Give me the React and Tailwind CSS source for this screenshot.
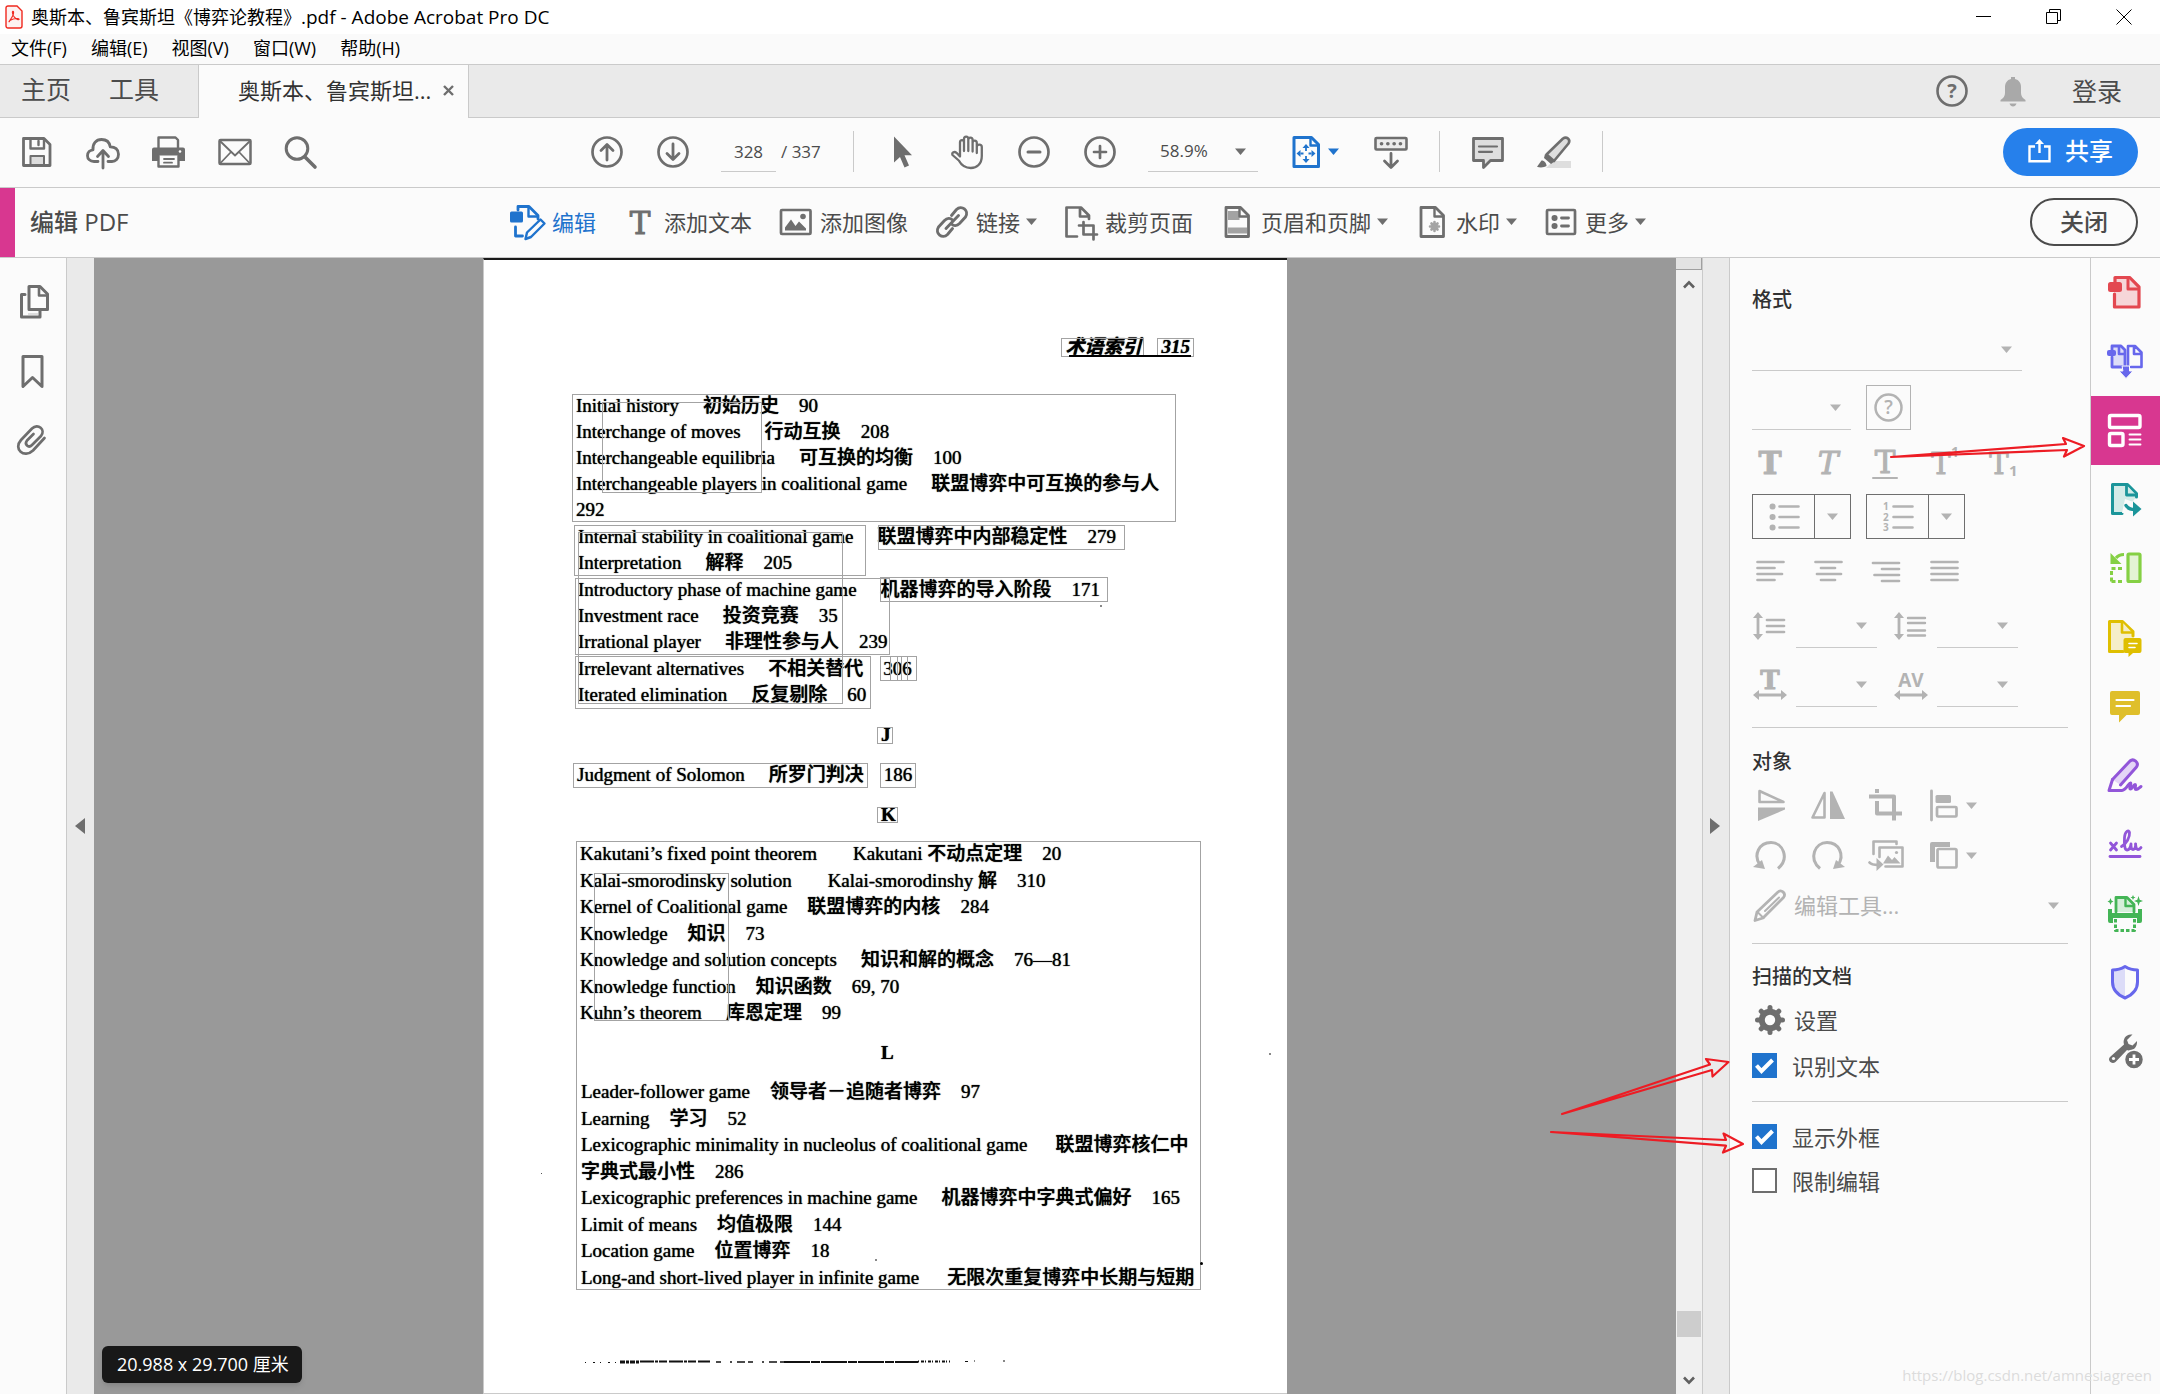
import React from "react";

const UI_FONT = "font-['Open_Sans','Noto_Sans_CJK_SC',sans-serif]";

function Icon({ children, className = "", size = 36 }) {
  return (
    <svg
      width={size}
      height={size}
      viewBox="0 0 36 36"
      fill="none"
      stroke="currentColor"
      strokeWidth="3"
      strokeLinecap="round"
      strokeLinejoin="round"
      aria-hidden="true"
      className={"shrink-0 overflow-visible " + className}
    >
      {children}
    </svg>
  );
}

function Caret({ className = "" }) {
  return (
    <svg width="11" height="7" viewBox="0 0 11 7" fill="currentColor" aria-hidden="true" className={"shrink-0 " + className}>
      <path d="M0 0.5h11L5.5 7z" />
    </svg>
  );
}

function IconButton({ label, children, className = "" }) {
  return (
    <button type="button" aria-label={label} className={"flex shrink-0 items-center " + className}>
      {children}
    </button>
  );
}

function SlabT({ x = 18, y = 30, bold, italic, size = 31 }) {
  return (
    <text
      x={x}
      y={y}
      textAnchor="middle"
      fill="currentColor"
      stroke="currentColor"
      strokeWidth="1"
      fontFamily="DejaVu Serif, serif"
      fontSize={size}
      fontWeight={bold ? 700 : 400}
      fontStyle={italic ? "italic" : "normal"}
    >
      T
    </text>
  );
}

/* ---------- window chrome ---------- */

function TitleBar() {
  return (
    <header className="flex h-[34px] items-center justify-between bg-white pl-[5px] pr-[28px]">
      <div className="flex items-center gap-2">
        <svg width="18" height="24" viewBox="0 0 18 24" fill="none" stroke="#f0281e" strokeWidth="1.4" aria-hidden="true">
          <path d="M3 1h9l5 5v15a2 2 0 0 1-2 2H3a2 2 0 0 1-2-2V3a2 2 0 0 1 2-2z" fill="#fdf2f1" />
          <path d="M4.2 16.8c1.2-2.6 4.6-6 4.4-9.6-.2-1.4-1.4-1-1.200.6.3 3 3 6.200 5.600 6.900 1.500.2 1.500-1 0-1.200-3-.3-6.200.8-8.200 2.100-.8.7-1 1.300-.6 1.200z" strokeWidth="1.100" />
        </svg>
        <h1 className="text-[18px] leading-6 text-black">
          奥斯本、鲁宾斯坦《博弈论教程》<span className="text-[19px]">.pdf - Adobe Acrobat Pro DC</span>
        </h1>
      </div>
      <div className="flex items-center gap-[54px] text-black">
        <IconButton label="最小化">
          <svg width="16" height="16" viewBox="0 0 16 16" stroke="currentColor"><path d="M0 7.500h15" /></svg>
        </IconButton>
        <IconButton label="还原">
          <svg width="16" height="16" viewBox="0 0 16 16" stroke="currentColor" fill="none"><path d="M.5 3.500h11v11h-11zM3.500 3.500v-3h11v11h-3" /></svg>
        </IconButton>
        <IconButton label="关闭窗口">
          <svg width="16" height="16" viewBox="0 0 16 16" stroke="currentColor"><path d="M.5.5l15 15M15.500.5l-15 15" /></svg>
        </IconButton>
      </div>
    </header>
  );
}

function MenuBar() {
  return (
    <nav className="flex h-[30px] items-center gap-6 bg-[#fafafa] pb-0.5 pl-[11px] text-[18px] leading-6 text-black">
      {["文件(F)", "编辑(E)", "视图(V)", "窗口(W)", "帮助(H)"].map((m) => (
        <button type="button" key={m}>{m}</button>
      ))}
    </nav>
  );
}

function TabBar() {
  return (
    <div className="flex h-[54px] border-t border-[#cacaca] bg-[#eaeaea] text-[#4b4b4b]">
      <div className="flex w-[198px] shrink-0 items-center gap-[38px] border-b border-[#cacaca] pb-0.5 pl-[21px] text-[25px]">
        <button type="button">主页</button>
        <button type="button">工具</button>
      </div>
      <div className="flex w-[271px] shrink-0 items-center justify-between border-x border-[#cacaca] bg-[#fbfbfb] pb-0.5 pl-[39px] pr-[14px] text-[22px] text-[#323232]">
        <button type="button" className="whitespace-nowrap">奥斯本、鲁宾斯坦...</button>
        <IconButton label="关闭标签页">
          <svg width="11" height="11" viewBox="0 0 11 11" stroke="#6e6e6e" strokeWidth="2.400"><path d="M1 1l9 9M10 1l-9 9" /></svg>
        </IconButton>
      </div>
      <div className="flex flex-1 items-center justify-end border-b border-[#cacaca] pr-[38px]">
        <IconButton label="帮助" className="text-[#6e6e6e]">
          <Icon>
            <circle cx="18" cy="18" r="14.500" strokeWidth="2.600" />
            <text x="18" y="25" textAnchor="middle" fill="currentColor" stroke="none" fontFamily="Open Sans, sans-serif" fontWeight="700" fontSize="20">?</text>
          </Icon>
        </IconButton>
        <IconButton label="通知" className="ml-[25px] text-[#a9a9a9]">
          <Icon>
            <path d="M16 4h4v2c4 1 6 4 6 8v6c0 3 1.500 5 4.500 7v1.500h-25V27c3-2 4.500-4 4.500-7v-6c0-4 2-7 6-8zM14.500 30.500h7c-.5 2-2 3-3.500 3s-3-1-3.500-3z" fill="currentColor" stroke="none" />
          </Icon>
        </IconButton>
        <button type="button" className="ml-[41px] text-[25px] leading-9 text-[#4b4b4b]">登录</button>
      </div>
    </div>
  );
}

const VRule = () => <div className="h-[41px] w-px bg-[#cacaca]" />;

function Toolbar() {
  return (
    <div className="grid h-[70px] grid-cols-[1fr_auto_1fr] items-center border-b border-[#cacaca] bg-[#fbfbfb] pb-0.5 text-[#6e6e6e]">
      <div className="flex items-center gap-[30px] pl-[19px]">
        <IconButton label="保存">
          <Icon>
            <path d="M4.500 4.500h20.500l6 6v21h-26.500z" strokeWidth="2.800" />
            <path d="M11.500 5v9.500h13.500v-9.500" strokeWidth="2.400" />
            <path d="M19.500 7v4" strokeWidth="2.400" />
            <path d="M11.500 31v-9h13.500v9z" fill="#dcdcdc" strokeWidth="2" />
          </Icon>
        </IconButton>
        <IconButton label="上传到云">
          <Icon>
            <path d="M13 27.500h-4c-4 0-6.500-2.600-6.500-5.800 0-3.400 2.500-5.700 5.500-5.900-.6-6 3-10.300 8.500-10.300 4.800 0 8 2.800 8.700 7.300 4.800-.1 8.300 2.600 8.300 7.400 0 4.300-2.900 7.300-6.500 7.300h-4" strokeWidth="2.800" />
            <path d="M18 34V17M12.500 22.500l5.500-6 5.500 6" strokeWidth="2.800" />
          </Icon>
        </IconButton>
        <IconButton label="打印">
          <Icon>
            <path d="M7.500 14V3.500h17l2.500 2.500v8" strokeWidth="2.400" />
            <path d="M3 13.500h29a2 2 0 0 1 2 2V27h-6v-5.500H7V27H1V15.500a2 2 0 0 1 2-2z" fill="currentColor" stroke="none" />
            <path d="M7.500 22v10.500h20V22" strokeWidth="2.400" />
            <path d="M13 25h10M13 28.700h8" strokeWidth="1.800" />
            <circle cx="29" cy="17.500" r="1.300" fill="#fff" stroke="none" />
          </Icon>
        </IconButton>
        <IconButton label="电子邮件">
          <Icon>
            <rect x="2.500" y="6" width="31" height="24" rx="1" strokeWidth="2.500" />
            <path d="M3 7l15 14.500L33 7M3.500 29l10.500-11M32.500 29L22 18" strokeWidth="1.800" />
          </Icon>
        </IconButton>
        <IconButton label="查找">
          <Icon>
            <circle cx="14" cy="14.500" r="10.800" strokeWidth="3" />
            <path d="M22 23l10 10" strokeWidth="3.600" />
          </Icon>
        </IconButton>
      </div>

      <div className="flex items-center gap-[30px] pl-8">
        <IconButton label="上一页">
          <Icon>
            <circle cx="18" cy="18" r="14.500" strokeWidth="2.700" />
            <path d="M18 26V11M12 16.500l6-6 6 6" strokeWidth="2.800" />
          </Icon>
        </IconButton>
        <IconButton label="下一页">
          <Icon>
            <circle cx="18" cy="18" r="14.500" strokeWidth="2.700" />
            <path d="M18 10v15M12 19.500l6 6 6-6" strokeWidth="2.800" />
          </Icon>
        </IconButton>
        <label className="flex items-center gap-[5px] text-[17px] text-[#4b4b4b]">
          <input aria-label="页码" defaultValue="328" className="h-[41px] w-[55px] border-b border-[#cacaca] bg-transparent text-center outline-none" />
          <span className="w-[42px] whitespace-nowrap">/ 337</span>
        </label>
        <VRule />
        <IconButton label="选择">
          <Icon><path d="M10 2.500v26l6-5.500 4.500 10.500 4.500-2-4.500-10.300h7.500z" fill="currentColor" stroke="none" /></Icon>
        </IconButton>
        <IconButton label="手形工具">
          <Icon>
            <path d="M10 22V8.500c0-3.300 4-3.300 4 0V17M14 9V5c0-3.300 4.300-3.300 4.300 0v12M18.300 6c0-3.300 4.300-3.300 4.300 0v11.500M22.600 9c0-3.300 4.200-3.300 4.200 0v10M26.800 13c0-3.200 5-3.200 5 0v9c0 8-5 12-11 12-6.500 0-9.500-3-12-7.500L2.500 21c-1-2.500 2-4 4-2.200l3.500 3.700" strokeWidth="2.300" />
          </Icon>
        </IconButton>
        <IconButton label="缩小">
          <Icon><circle cx="18" cy="18" r="14.500" strokeWidth="2.700" /><path d="M12 18h12" /></Icon>
        </IconButton>
        <IconButton label="放大">
          <Icon><circle cx="18" cy="18" r="14.500" strokeWidth="2.700" /><path d="M12 18h12M18 12v12" strokeWidth="2.700" /></Icon>
        </IconButton>
        <div className="relative flex w-[110px] items-center text-[17px] text-[#4b4b4b]">
          <select aria-label="缩放比例" className="h-[41px] w-full appearance-none border-b border-[#cacaca] bg-transparent pl-[12px] outline-none">
            <option>58.9%</option>
          </select>
          <Caret className="pointer-events-none absolute right-[12px] text-[#6e6e6e]" />
        </div>
        <IconButton label="适合窗口" className="mr-1 gap-[4px] text-[#1f73cd]">
          <Icon>
            <path d="M6 3.500h17.500l7 7v22H6z" strokeWidth="3" />
            <path d="M22.500 4v7.500h7.500" strokeWidth="2.400" />
            <path d="M18 14v3M18 22v3M12.500 19.500h3M20.500 19.500h3" strokeWidth="1.800" strokeLinecap="butt" />
            <path d="M18 10l3.500 4h-7zM18 29l3.500-4h-7zM8.500 19.500l4-3.500v7zM27.500 19.500l-4-3.500v7z" fill="currentColor" stroke="none" />
          </Icon>
          <Caret />
        </IconButton>
        <IconButton label="阅读模式">
          <Icon>
            <rect x="2.500" y="4" width="31" height="11.500" rx="1" fill="#ececec" strokeWidth="2.600" />
            <path d="M8.500 9.700h.1M14.800 9.700h.1M21.100 9.700h.1M27.400 9.700h.1" strokeWidth="3.600" />
            <path d="M18 19.500v13M11.500 27l6.500 6.500 6.500-6.500" strokeWidth="2.800" />
          </Icon>
        </IconButton>
        <VRule />
        <IconButton label="添加注释">
          <Icon>
            <path d="M3.500 4.500h29v22h-12l-7 7v-7h-10z" fill="#dedede" strokeWidth="2.800" />
            <path d="M9 12.500h18M9 17.800h13" strokeWidth="2.200" />
          </Icon>
        </IconButton>
        <IconButton label="高亮文本">
          <Icon>
            <path d="M17 27h18v7H10z" fill="#dedede" stroke="none" />
            <path d="M10.500 20.500L27 4.500c3.500-2.500 8 1 5.500 5L18 27z" fill="#dedede" strokeWidth="2.600" />
            <path d="M9 20l9.500 7.500-3.500 2.500-7-6z" fill="currentColor" stroke="none" />
            <path d="M5.500 26.500c3 0 5 2.500 5 5.500-2 1.500-6.500 1.800-9.500.8z" fill="currentColor" stroke="none" />
          </Icon>
        </IconButton>
        <VRule />
      </div>

      <div className="flex justify-end pr-[22px]">
        <button type="button" className="flex h-12 w-[135px] items-center justify-center gap-[14px] rounded-full bg-[#2680eb] pb-px text-[24px] font-medium text-white">
          <svg width="23" height="24" viewBox="0 0 23 24" fill="none" stroke="currentColor" strokeWidth="2.400" aria-hidden="true">
            <path d="M7 7.500H1.500v14.800h20V7.500H16M11.500 14V3" />
            <path d="M11.500 0l4.500 5h-9z" fill="currentColor" stroke="none" />
          </svg>
          共享
        </button>
      </div>
    </div>
  );
}

const PageOutline = () => (
  <>
    <path d="M7 3.500h14.500l8 8V32.500H7z" strokeWidth="2.800" />
    <path d="M20.500 4v8.500h8.500" strokeWidth="2.400" />
  </>
);

function EditItem({ icon, label, caret, active }) {
  return (
    <button type="button" className={"flex items-center gap-[6px] text-[22px] leading-8 " + (active ? "text-[#1f73cd]" : "text-[#4b4b4b]")}>
      <span className={active ? "" : "text-[#6e6e6e]"}>{icon}</span>
      <span className="whitespace-nowrap">{label}</span>
      {caret && <Caret className="text-[#6e6e6e]" />}
    </button>
  );
}

function EditBar() {
  return (
    <div className="grid h-[70px] grid-cols-[1fr_auto_1fr] items-center border-b border-[#cacaca] bg-[#fbfbfb]">
      <div className="flex h-full items-center gap-[15px]">
        <div className="h-full w-[15px] bg-[#d83790]" />
        <h2 className="pb-0.5 text-[24px] font-medium text-[#4b4b4b]">编辑 PDF</h2>
      </div>
      <div className="flex items-center gap-[26px] pb-0.5 pr-1">
        <EditItem
          active
          label="编辑"
          icon={
            <Icon>
              <path d="M8 6V2.500h11l9 9V15" strokeWidth="2.800" />
              <path d="M18.500 3v9.500h8.500" strokeWidth="2.400" />
              <rect x="0" y="7.500" width="13" height="11" rx="1.500" fill="currentColor" stroke="none" />
              <path d="M5.500 23v9h7" strokeWidth="2.800" />
              <path d="M17 28.500L30.500 15.500l4 4L21 33l-5.500 2z" strokeWidth="2.400" />
            </Icon>
          }
        />
        <EditItem label="添加文本" icon={<Icon><SlabT /></Icon>} />
        <EditItem
          label="添加图像"
          icon={
            <Icon>
              <rect x="3" y="6" width="29.500" height="24" rx="1" strokeWidth="2.700" />
              <path d="M7 26.500v-3l6-8 4.500 6.500 3.500-4.500 7 7v2z" fill="currentColor" stroke="none" />
              <circle cx="25" cy="12.500" r="2.800" fill="currentColor" stroke="none" />
            </Icon>
          }
        />
        <EditItem
          label="链接"
          caret
          icon={
            <Icon>
              <path d="M17.500 11.500l5-6c5-5 13 1 9 7.500l-6 6.500c-2.500 2.500-6 2.500-8 .5M18.500 24.500l-5 6c-5 5-13-1-9-7.500l6-6.500c2.500-2.500 6-2.500 8-.5M12 24.500L24.500 11.500" strokeWidth="2.900" />
            </Icon>
          }
        />
        <EditItem
          label="裁剪页面"
          icon={
            <Icon>
              <path d="M14 32.500H3.500v-29H18l8 8V15M17 4v8.500h8.500" strokeWidth="2.700" />
              <path d="M16 21.500h14.500v14M20.500 18v12.500h13.500" strokeWidth="2.700" />
            </Icon>
          }
        />
        <EditItem
          label="页眉和页脚"
          caret
          icon={
            <Icon>
              <path d="M9 7h11.500v9H9zM9 23.500h19v6H9z" fill="#a3a3a3" stroke="none" />
              <PageOutline />
            </Icon>
          }
        />
        <EditItem
          label="水印"
          caret
          icon={
            <Icon>
              <PageOutline />
              <path d="M20.500 18v9M16 22.500h9M17.500 19.500l6 6M23.500 19.500l-6 6" stroke="#a3a3a3" strokeWidth="2.600" />
            </Icon>
          }
        />
        <EditItem
          label="更多"
          caret
          icon={
            <Icon>
              <rect x="4" y="6" width="28" height="24" rx="1" strokeWidth="2.700" />
              <path d="M11.500 14h.1M11.500 22h.1" strokeWidth="6" />
              <path d="M18.500 14h7M18.500 22h7" strokeWidth="2.800" />
            </Icon>
          }
        />
      </div>
      <div className="flex justify-end pb-0.5 pr-[22px]">
        <button type="button" className="h-12 w-[108px] rounded-full border-2 border-[#4b4b4b] text-[24px] font-medium leading-none text-[#4b4b4b]">关闭</button>
      </div>
    </div>
  );
}

/* ---------- document ---------- */

const SECTION_I = [
  {
    pad: "pl-[92px]",
    lines: [
      ["Initial history", "初始历史", "90"],
      ["Interchange of moves", "行动互换", "208"],
      ["Interchangeable equilibria", "可互换的均衡", "100"],
      ["Interchangeable players in coalitional game", "联盟博弈中可互换的参与人"],
      ["292"],
    ],
  },
  {
    pad: "pl-[94px]",
    lines: [
      ["Internal stability in coalitional game", "联盟博弈中内部稳定性", "279"],
      ["Interpretation", "解释", "205"],
    ],
  },
  {
    pad: "pl-[94px]",
    lines: [
      ["Introductory phase of machine game", "机器博弈的导入阶段", "171"],
      ["Investment race", "投资竞赛", "35"],
      ["Irrational player", "非理性参与人", "239"],
    ],
  },
  {
    pad: "pl-[94px]",
    lines: [
      ["Irrelevant alternatives", "不相关替代", "306"],
      ["Iterated elimination", "反复剔除", "60"],
    ],
  },
];

const SECTION_K = [
  ["Kakutani’s fixed point theorem", "Kakutani 不动点定理", "20"],
  ["Kalai-smorodinsky solution", "Kalai-smorodinshy 解", "310"],
  ["Kernel of Coalitional game", "联盟博弈的内核", "284"],
  ["Knowledge", "知识", "73"],
  ["Knowledge and solution concepts", "知识和解的概念", "76—81"],
  ["Knowledge function", "知识函数", "69, 70"],
  ["Kuhn’s theorem", "库恩定理", "99"],
];

const SECTION_L = [
  ["Leader-follower game", "领导者－追随者博弈", "97"],
  ["Learning", "学习", "52"],
  ["Lexicographic minimality in nucleolus of coalitional game", "联盟博弈核仁中"],
  ["字典式最小性", "286"],
  ["Lexicographic preferences in machine game", "机器博弈中字典式偏好", "165"],
  ["Limit of means", "均值极限", "144"],
  ["Location game", "位置博弈", "18"],
  ["Long-and short-lived player in infinite game", "无限次重复博弈中长期与短期"],
];

/* Space after the English term, where it differs from the usual 20px. */
const TERM_GAP = {
  "Kakutani’s fixed point theorem": "mr-9",
  "Kalai-smorodinsky solution": "mr-9",
  "Knowledge and solution concepts": "mr-6",
  "Kuhn’s theorem": "mr-6",
  "Lexicographic minimality in nucleolus of coalitional game": "mr-7",
  "Lexicographic preferences in machine game": "mr-6",
  "Long-and short-lived player in infinite game": "mr-7",
};

function Entry({ parts, className = "leading-[26px]", gap = "mr-5" }) {
  return (
    <li className={"flex whitespace-nowrap " + className}>
      {parts.map((p, i) => (
        <span key={p} className={i === 0 ? TERM_GAP[p] || gap : "mr-5"}>{p}</span>
      ))}
    </li>
  );
}

const Letter = ({ children }) => (
  <h3 className="mt-[14px] pl-[397px] text-[19px] font-bold leading-[26px]">{children}</h3>
);

const OUTLINES = [
  "left-[577px] top-[80px] h-[19px] w-[83px]",
  "left-[673px] top-[80px] h-[19px] w-[37px]",
  "left-[88px] top-[136px] h-[128px] w-[604px]",
  "left-[118px] top-[144px] h-[91px] w-[160px]",
  "left-[90px] top-[267px] h-[51px] w-[292px]",
  "left-[394px] top-[267px] h-[25px] w-[247px]",
  "left-[94px] top-[274px] h-[172px] w-[265px]",
  "left-[91px] top-[320px] h-[77px] w-[315px]",
  "left-[396px] top-[319px] h-[25px] w-[228px]",
  "left-[91px] top-[398px] h-[53px] w-[296px]",
  "left-[396px] top-[398px] h-[25px] w-[37px]",
  "left-[406px] top-[398px] h-[25px] w-[8px]",
  "left-[417px] top-[398px] h-[25px] w-[7px]",
  "left-[393px] top-[469px] h-[17px] w-[16px]",
  "left-[89px] top-[505px] h-[25px] w-[295px]",
  "left-[396px] top-[505px] h-[25px] w-[36px]",
  "left-[393px] top-[549px] h-[16px] w-[21px]",
  "left-[92px] top-[583px] h-[449px] w-[625px]",
  "left-[110px] top-[615px] h-[148px] w-[135px]",
];

function DocumentPage() {
  return (
    <article className="relative w-[804px] shrink-0 border-b border-l border-t-2 border-b-[#cacaca] border-l-[#cacaca] border-t-[#1a1a1a] bg-white pt-[74px] font-['Liberation_Serif','Noto_Sans_CJK_SC',serif] text-[19px] font-medium text-black [text-shadow:0_0_1px_#000]">
      <p className="flex justify-end gap-5 pr-[97px] font-bold italic leading-[26px]">
        <span>术语索引</span>
        <span>315</span>
      </p>
      <div className="mt-[33px] flex flex-col gap-px">
        {SECTION_I.map((g) => (
          <ul key={g.lines[0][0]} className={g.pad}>
            {g.lines.map((l) => <Entry key={l[0]} parts={l} gap="mr-6" />)}
          </ul>
        ))}
      </div>
      <Letter>J</Letter>
      <ul className="mt-[14px] pl-[93px]">
        <Entry parts={["Judgment of Solomon", "所罗门判决", "186"]} gap="mr-6" />
      </ul>
      <Letter>K</Letter>
      <ul className="mt-[13px] pl-[96px]">
        {SECTION_K.map((l) => <Entry key={l[0]} parts={l} className="odd:leading-[26px] even:leading-[27px]" />)}
      </ul>
      <Letter>L</Letter>
      <ul className="mt-[13px] pl-[97px]">
        {SECTION_L.map((l) => <Entry key={l[0]} parts={l} className="odd:leading-[26px] even:leading-[27px]" />)}
      </ul>

      <div className="pointer-events-none absolute inset-x-0 -top-0.5 bottom-0">
        {OUTLINES.map((pos) => (
          <div key={pos} className={"absolute border border-[#a3a3a3] " + pos} />
        ))}
        <div className="absolute left-[585px] top-[97px] h-[2px] w-[122px] bg-black" />
        <svg className="absolute left-[100px] top-[1100px]" width="425" height="8" viewBox="0 0 425 8" stroke="#111" fill="none" aria-hidden="true">
          <path d="M1 4.500h34" strokeDasharray="1 7 2 5" />
          <path d="M36 4h20" strokeWidth="3" strokeDasharray="5 1 3 1" />
          <path d="M56 3.500h70" strokeWidth="2" strokeDasharray="14 1 3 1 8 2" />
          <path d="M132 4h68" strokeDasharray="5 9 2 5 8 3" strokeWidth="1.500" />
          <path d="M200 4h134" strokeWidth="2" strokeDasharray="26 1 9 1" />
          <path d="M334 3.500h32" strokeWidth="2" strokeDasharray="1 2 3 1" />
          <path d="M381 3.500h3M390 3h1M419 3h2" />
        </svg>
        <div className="absolute left-[716px] top-[1004px] size-[3px] rounded-full bg-black" />
        <div className="absolute left-[616px] top-[347px] size-[2px] bg-[#888]" />
        <div className="absolute left-[391px] top-[1001px] size-[2px] bg-[#888]" />
        <div className="absolute left-[785px] top-[795px] size-[2px] bg-[#888]" />
        <div className="absolute left-[57px] top-[915px] size-[1px] bg-[#555]" />
      </div>
    </article>
  );
}

function Scrollbar() {
  return (
    <div className="flex w-[26px] shrink-0 flex-col items-center bg-[#f0f0f0] text-[#606060]">
      <div className="h-[12px] w-full border-b border-r border-[#a0a0a0] bg-[#e3e3e3]" />
      <IconButton label="向上滚动" className="mt-[10px]">
        <svg width="12" height="9" viewBox="0 0 12 9" fill="none" stroke="currentColor" strokeWidth="2.600"><path d="M1 7.500L6 2.300l5 5.200" /></svg>
      </IconButton>
      <div className="mt-auto h-[26px] w-6 bg-[#cdcdcd]" />
      <IconButton label="向下滚动" className="mb-[9px] mt-[39px]">
        <svg width="12" height="9" viewBox="0 0 12 9" fill="none" stroke="currentColor" strokeWidth="2.600"><path d="M1 1.500l5 5.200 5-5.200" /></svg>
      </IconButton>
    </div>
  );
}

/* ---------- format panel ---------- */

function LineSelect({ label, className }) {
  return (
    <div className={"relative flex items-center " + className}>
      <select aria-label={label} className="h-full w-full appearance-none border-b border-[#cacaca] bg-transparent outline-none" />
      <Caret className="pointer-events-none absolute right-[10px] text-[#b3b3b3]" />
    </div>
  );
}

function ListButton({ label, children }) {
  return (
    <div className="flex h-[45px] w-[99px] border border-[#6e6e6e]">
      <button type="button" aria-label={label} className="flex w-[62px] items-center justify-center border-r border-[#6e6e6e]">{children}</button>
      <button type="button" aria-label={label + "选项"} className="flex flex-1 items-center justify-center"><Caret /></button>
    </div>
  );
}

function Check({ label, checked, className = "" }) {
  return (
    <label className={"flex h-[25px] items-center gap-[15px] text-[22px] text-[#4b4b4b] " + className}>
      <span className="relative size-[25px] shrink-0">
        <input type="checkbox" defaultChecked={checked} className="peer absolute inset-0 size-[25px] appearance-none border-2 border-[#6e6e6e] bg-white checked:border-[#1f73cd] checked:bg-[#1f73cd]" />
        <svg className="pointer-events-none absolute inset-0 hidden peer-checked:block" width="25" height="25" viewBox="0 0 25 25" fill="none" stroke="#fff" strokeWidth="4" aria-hidden="true">
          <path d="M4.500 12.500l5 5.500L20.500 7" />
        </svg>
      </span>
      <span className="leading-8">{label}</span>
    </label>
  );
}

const Rule = ({ className }) => <hr className={"mr-[22px] border-0 border-t border-[#cacaca] " + className} />;

function Numeral({ x, y, children, size = 10 }) {
  return <text x={x} y={y} fill="currentColor" stroke="none" fontFamily="Open Sans, sans-serif" fontWeight="700" fontSize={size}>{children}</text>;
}

function FormatPanel() {
  return (
    <aside className="w-[361px] shrink-0 border-l border-[#cacaca] bg-[#fbfbfb] pl-[22px] pt-7 text-[#b3b3b3]">
      <h3 className="text-[20px] font-medium leading-7 text-[#323232]">格式</h3>
      <LineSelect label="字体" className="mt-[14px] h-[43px] w-[270px]" />
      <div className="mt-[14px] flex gap-[15px]">
        <LineSelect label="字号" className="h-[45px] w-[99px]" />
        <button type="button" aria-label="字体颜色" className="flex size-[45px] items-center justify-center border border-[#b3b3b3]">
          <Icon>
            <circle cx="17.500" cy="17.500" r="13" strokeWidth="2.500" />
            <text x="17.500" y="24" textAnchor="middle" fill="currentColor" stroke="none" fontFamily="Open Sans, sans-serif" fontWeight="600" fontSize="19">?</text>
          </Icon>
        </button>
      </div>
      <div className="mt-[14px] flex gap-[22px]">
        <IconButton label="粗体"><Icon><SlabT bold y={30} /></Icon></IconButton>
        <IconButton label="斜体"><Icon><SlabT italic y={30} /></Icon></IconButton>
        <IconButton label="下划线"><Icon><SlabT y={29} x={17} /><path d="M5 34h24" strokeWidth="2" /></Icon></IconButton>
        <IconButton label="上标"><Icon><SlabT y={30} x={15} size={29} /><Numeral x={25} y={13} size={14}>1</Numeral></Icon></IconButton>
        <IconButton label="下标"><Icon><SlabT y={30} x={15} size={29} /><Numeral x={25} y={32} size={15}>1</Numeral></Icon></IconButton>
      </div>
      <div className="mt-[14px] flex gap-[15px]">
        <ListButton label="项目符号列表">
          <Icon>
            <path d="M6.500 7.500h.1M6.500 18h.1M6.500 28.500h.1" strokeWidth="6" />
            <path d="M13.500 7.500h19M13.500 18h19M13.500 28.500h19" strokeWidth="2.600" />
          </Icon>
        </ListButton>
        <ListButton label="编号列表">
          <Icon>
            <Numeral x={3} y={11}>1</Numeral>
            <Numeral x={3} y={21.500}>2</Numeral>
            <Numeral x={3} y={32}>3</Numeral>
            <path d="M13.500 7.500h19M13.500 18h19M13.500 28.500h19" strokeWidth="2.600" />
          </Icon>
        </ListButton>
      </div>
      <div className="mt-[14px] flex gap-[22px]">
        <IconButton label="左对齐"><Icon><path d="M5.500 9h26M5.500 15h17M5.500 21h24.500M5.500 27h17" strokeWidth="2.700" /></Icon></IconButton>
        <IconButton label="居中对齐"><Icon><path d="M5.500 9h26M11 15h14M7 21h24M11 27h14" strokeWidth="2.700" /></Icon></IconButton>
        <IconButton label="右对齐"><Icon><path d="M5 10h26M14 16h17M6.500 22H31M14 28h17" strokeWidth="2.700" /></Icon></IconButton>
        <IconButton label="两端对齐"><Icon><path d="M5.500 9h26M5.500 15h26M5.500 21h26M5.500 27h26" strokeWidth="2.700" /></Icon></IconButton>
      </div>
      <div className="mt-[14px] flex items-center">
        <Icon>
          <path d="M6 8v21" strokeWidth="2.800" />
          <path d="M6 4l5 6H1zM6 32l5-6H1z" fill="currentColor" stroke="none" />
          <path d="M15 12h17M15 18h17M15 24h17" strokeWidth="2.700" />
        </Icon>
        <LineSelect label="行间距" className="ml-2 h-[45px] w-[81px]" />
        <Icon className="ml-4">
          <path d="M6 8v21" strokeWidth="2.800" />
          <path d="M6 4l5 6H1zM6 32l5-6H1z" fill="currentColor" stroke="none" />
          <path d="M15 10h17M15 15h17M15 22.500h17M15 27.500h17" strokeWidth="2.400" />
        </Icon>
        <LineSelect label="段落间距" className="ml-2 h-[45px] w-[81px]" />
      </div>
      <div className="mt-[14px] flex items-center">
        <Icon>
          <SlabT bold y={22} size={26} />
          <path d="M6 28h24" strokeWidth="2.800" />
          <path d="M1 28l6-5v10zM35 28l-6-5v10z" fill="currentColor" stroke="none" />
        </Icon>
        <LineSelect label="水平缩放" className="ml-2 h-[45px] w-[81px]" />
        <Icon className="ml-4">
          <text x="18" y="20" textAnchor="middle" fill="currentColor" stroke="none" fontFamily="Open Sans, sans-serif" fontWeight="700" fontSize="19">AV</text>
          <path d="M6 28h24" strokeWidth="2.800" />
          <path d="M1 28l6-5v10zM35 28l-6-5v10z" fill="currentColor" stroke="none" />
        </Icon>
        <LineSelect label="字符间距" className="ml-2 h-[45px] w-[81px]" />
      </div>

      <Rule className="mt-5" />
      <h3 className="mt-5 text-[20px] font-medium leading-7 text-[#323232]">对象</h3>
      <div className="mt-[11px] flex gap-[22px]">
        <IconButton label="垂直翻转">
          <Icon>
            <path d="M7.500 4v11h24z" strokeWidth="2.600" />
            <path d="M6 34V20.500h27v2z" fill="currentColor" stroke="none" />
          </Icon>
        </IconButton>
        <IconButton label="水平翻转">
          <Icon>
            <path d="M14.500 6v24.500h-12z" strokeWidth="2.600" />
            <path d="M20 4.500h2.500L35 32H20z" fill="currentColor" stroke="none" />
          </Icon>
        </IconButton>
        <IconButton label="裁剪">
          <Icon>
            <path d="M1 9.500H26v24M9 2v4M9 14v12.500h25" strokeWidth="4" strokeLinecap="butt" />
          </Icon>
        </IconButton>
        <IconButton label="对齐对象" className="gap-1">
          <Icon>
            <path d="M5.500 4v29" strokeWidth="2.800" />
            <rect x="9.500" y="8" width="15.500" height="8" rx="1.500" fill="currentColor" stroke="none" />
            <rect x="11" y="20" width="19.500" height="9.500" rx="1" strokeWidth="2.700" />
          </Icon>
          <Caret />
        </IconButton>
      </div>
      <div className="mt-[14px] flex gap-[22px]">
        <IconButton label="逆时针旋转">
          <Icon>
            <path d="M26 31.500c12-10 5-26-7-26S1 18 8 28" strokeWidth="3" strokeLinecap="butt" />
            <path d="M1 30l9-7 3 9z" fill="currentColor" stroke="none" />
          </Icon>
        </IconButton>
        <IconButton label="顺时针旋转">
          <Icon>
            <path d="M10 31.500c-12-10-5-26 7-26S35 18 28 28" strokeWidth="3" strokeLinecap="butt" />
            <path d="M35 30l-9-7-3 9z" fill="currentColor" stroke="none" />
          </Icon>
        </IconButton>
        <IconButton label="替换图像">
          <Icon>
            <path d="M5.500 17V4.500h23V7" strokeWidth="2.600" />
            <path d="M11.500 20v-9.500h23v19h-17" strokeWidth="2.600" />
            <path d="M15 26.500l5-8 4 4.500 2.500-3 6 6.500z" fill="currentColor" stroke="none" />
            <circle cx="28.500" cy="15.500" r="1.600" fill="currentColor" stroke="none" />
            <path d="M1.500 25.500c1.500 2 4 2.500 9 2.500" strokeWidth="2.800" />
            <path d="M8.500 21l7 6.500-7 6.500z" fill="currentColor" stroke="none" />
          </Icon>
        </IconButton>
        <IconButton label="排列对象" className="gap-1">
          <Icon>
            <path d="M4 25V7a2 2 0 0 1 2-2h18v5H9v15z" fill="currentColor" stroke="none" />
            <rect x="11.500" y="12" width="19" height="18.500" rx="1.500" strokeWidth="2.700" />
          </Icon>
          <Caret />
        </IconButton>
      </div>
      <button type="button" className="mt-[14px] flex h-9 w-[307px] items-center gap-[6px] text-[22px] leading-8">
        <Icon>
          <path d="M5 25L26 5c3.500-3 8.500 1.500 5.500 5.500L11 31l-8 2.500z" strokeWidth="2.800" />
          <path d="M13 24L27 10.500" strokeWidth="2" />
          <path d="M5.500 25l6 6" strokeWidth="2" />
        </Icon>
        编辑工具...
        <Caret className="ml-auto" />
      </button>

      <Rule className="mt-5" />
      <h3 className="mt-[19px] text-[20px] font-medium leading-7 text-[#323232]">扫描的文档</h3>
      <button type="button" className="mt-[11px] flex h-9 items-center gap-[6px] text-[22px] leading-8 text-[#4b4b4b]">
        <Icon className="text-[#6e6e6e]">
          <circle cx="18" cy="18" r="8.200" strokeWidth="6" />
          <path d="M18 5.500v4M18 26.500v4M5.500 18h4M26.500 18h4M9.200 9.200l2.500 2.500M24.300 24.300l2.500 2.500M9.200 26.800l2.500-2.500M24.300 11.700l2.500-2.500" strokeWidth="5" />
        </Icon>
        设置
      </button>
      <Check label="识别文本" checked className="mt-[15px]" />
      <Rule className="mt-[23px]" />
      <Check label="显示外框" checked className="mt-[22px]" />
      <Check label="限制编辑" className="mt-[19px]" />
    </aside>
  );
}

/* ---------- tool rail ---------- */

const TOOLS = [
  {
    label: "创建 PDF",
    color: "text-[#e34850]",
    icon: (
      <>
        <path d="M8 8V3.500h14.500l9.500 9.500v20H7.500V20" fill="#f6d6d8" strokeWidth="3.200" />
        <path d="M21 4v11h10.500" fill="#f6d6d8" strokeWidth="3" />
        <rect x="1" y="8" width="14" height="10" rx="2.500" fill="currentColor" stroke="none" />
      </>
    ),
  },
  {
    label: "合并文件",
    color: "text-[#6767ec]",
    icon: (
      <>
        <path d="M5 7V3h9l4 4v17H5V14" fill="#dcdcf8" strokeWidth="2.800" />
        <path d="M21 24V3h7l6.500 6.500V24H24M27 3.500V11h7M12 3.500V11h5" strokeWidth="2.600" />
        <rect x="0" y="7" width="9" height="6" rx="2" fill="currentColor" stroke="none" />
        <path d="M15.500 23h7v5H26l-7 7.500-7-7.500h3.500z" fill="currentColor" stroke="#fbfbfb" strokeWidth="1" />
      </>
    ),
  },
  {
    label: "编辑 PDF",
    color: "text-white",
    active: true,
    icon: (
      <>
        <rect x="2.500" y="3.500" width="30.500" height="12" rx="1.500" strokeWidth="3.400" />
        <rect x="2.500" y="21.500" width="13.500" height="12" rx="1.500" strokeWidth="3.400" />
        <path d="M22.500 22.500h11M22.500 27.500h11M22.500 32.500h11" strokeWidth="1.900" />
      </>
    ),
  },
  {
    label: "导出 PDF",
    color: "text-[#1b959a]",
    icon: (
      <>
        <path d="M15 32.500H5.500v-29h15l9 9V16" fill="#d3ebe8" strokeWidth="3" />
        <path d="M19.500 4v10h9.500" fill="#d3ebe8" strokeWidth="2.800" />
        <path d="M18 18l-3 14h8l6-10z" fill="#fbfbfb" stroke="none" />
        <path d="M19 24.500c2 3.500 5 4 9 4" strokeWidth="3.400" />
        <path d="M26 20.500l8.500 7.500-8.500 7.500z" fill="currentColor" stroke="none" />
      </>
    ),
  },
  {
    label: "组织页面",
    color: "text-[#85d044]",
    icon: (
      <>
        <rect x="21" y="4" width="12" height="27.500" rx="1" fill="#e3f3d4" strokeWidth="3.200" />
        <path d="M4.500 31.500v-13H17M4.500 31.500H17" strokeWidth="3" strokeDasharray="4 2.500" strokeLinecap="butt" />
        <path d="M17 4.500c-4 0-6 1-8 3.500" strokeWidth="3.200" strokeLinecap="butt" />
        <path d="M3.500 3v11h11z" fill="currentColor" stroke="none" />
      </>
    ),
  },
  {
    label: "发送以供注释",
    color: "text-[#dfbf00]",
    icon: (
      <>
        <path d="M16 32.500H2.500v-30h13L26 12.500V17" fill="#f5eec9" strokeWidth="3" />
        <path d="M15 3v10.500h10" fill="#f5eec9" strokeWidth="2.600" />
        <path d="M18.500 19h14a2 2 0 0 1 2 2v11a2 2 0 0 1-2 2H26l-4.500 4v-4h-3a2 2 0 0 1-2-2V21a2 2 0 0 1 2-2z" fill="currentColor" stroke="none" />
        <path d="M22 24.500h8M22 28.500h6" stroke="#fff" strokeWidth="1.600" />
      </>
    ),
  },
  {
    label: "注释",
    color: "text-[#dfbf2b]",
    icon: (
      <>
        <path d="M5 3h26a2 2 0 0 1 2 2v20a2 2 0 0 1-2 2H19.500L12 34.500V27H5a2 2 0 0 1-2-2V5a2 2 0 0 1 2-2z" fill="currentColor" stroke="none" />
        <path d="M9.500 12h17M9.500 18h13.500" stroke="#fff" strokeWidth="2.200" />
      </>
    ),
  },
  {
    label: "填写和签名",
    color: "text-[#9256d9]",
    icon: (
      <>
        <path d="M5.500 22.500L23 4c3.500-3 9.500 1.500 6.500 6L13.500 28" fill="#e4d5f6" strokeWidth="3" />
        <path d="M5.500 22.500L2 33.500h13c4 0 7-8 8.500-7.500s-2 6 0 6 3-4.500 4.500-4.500-1 5 1 5 3-1.500 5-3" strokeWidth="3" />
      </>
    ),
  },
  {
    label: "请求签名",
    color: "text-[#9256d9]",
    icon: (
      <>
        <path d="M3.500 17l6 7M9.500 17l-6 7" strokeWidth="2.800" />
        <path d="M14.500 20.500c5-3 8.500-9 8-14-.5-3-4.500-1.500-5 5-.4 6 0 12.500 2.500 12.500s3.500-3 4-6c-.2 3 .5 5.500 2 5.500s3-2.500 2.500-5.500c.5 4 1 5.500 2.500 5.500s2-.8 3-2" strokeWidth="2.800" />
        <path d="M3 30.500h30" strokeWidth="2.800" />
      </>
    ),
  },
  {
    label: "扫描和 OCR",
    color: "text-[#44b556]",
    icon: (
      <>
        <path d="M9 17V2.500h11l7 7V17" fill="#d6efda" strokeWidth="2.800" />
        <path d="M18.500 3v8H26" fill="#d6efda" strokeWidth="2.400" />
        <path d="M1 14h4v4h26v-4h4v12a2 2 0 0 1-2 2h-3v-5H6v5H3a2 2 0 0 1-2-2z" fill="currentColor" stroke="none" />
        <path d="M8.500 24v11.500h19V24" strokeWidth="3" strokeDasharray="3.500 2" strokeLinecap="butt" />
        <path d="M31.500 1l1.200 3.800 3.300 1.200-3.300 1.200-1.200 3.800-1.200-3.800L27 6l3.300-1.200zM3.500 3l1 2.500 2 1-2 1-1 2.500-1-2.500-2-1 2-1zM26 0l.8 1.800 1.700.7-1.700.7L26 5l-.8-1.800-1.700-.7 1.700-.7z" fill="currentColor" stroke="none" />
      </>
    ),
  },
  {
    label: "保护",
    color: "text-[#6767ec]",
    icon: (
      <>
        <path d="M18 3.500C14 6 10 7 5.500 7v12c0 7 6 12 12.500 14.500z" fill="#dcdcf8" stroke="none" />
        <path d="M18 2.500C14 5 10 6 5.500 6v12c0 8 5.500 13 12.500 16 7-3 12.500-8 12.500-16V6C26 6 22 5 18 2.500z" strokeWidth="3" />
      </>
    ),
  },
  {
    label: "更多工具",
    color: "text-[#6e6e6e]",
    icon: (
      <>
        <path d="M25.500 1.500c-7-1-10 5-8.500 10L3 24c-3 3 1.500 8 5.500 5L20 17c5 2 10.500-2 10-9l-4.500 4.500-4-1.500L20 7z" fill="currentColor" stroke="none" />
        <circle cx="6.500" cy="25.500" r="1.600" fill="#fbfbfb" stroke="none" />
        <circle cx="27" cy="26.500" r="9.500" fill="currentColor" stroke="#fbfbfb" strokeWidth="1.500" />
        <path d="M22 26.500h10M27 21.500v10" stroke="#fff" strokeWidth="2.800" strokeLinecap="butt" />
      </>
    ),
  },
];

function ToolRail() {
  return (
    <nav className="flex w-[70px] shrink-0 flex-col border-l border-[#cacaca] bg-[#fbfbfb]">
      {TOOLS.map((t) => (
        <button type="button" key={t.label} aria-label={t.label} className={"flex h-[69px] items-center justify-center pb-0.5 pr-0.5 " + t.color + (t.active ? " bg-[#d83790]" : "")}>
          <Icon>{t.icon}</Icon>
        </button>
      ))}
    </nav>
  );
}

function LeftRail() {
  return (
    <nav className="flex w-[67px] shrink-0 flex-col gap-[33px] border-r border-[#cacaca] bg-[#fbfbfb] pl-[15px] pt-[26px] text-[#6e6e6e]">
      <IconButton label="页面缩略图">
        <Icon>
          <path d="M10 10.500H6.500V33H25v-6" strokeWidth="3" />
          <path d="M13 29h10v2H13z" fill="#dedede" stroke="none" />
          <path d="M14 2.500h11l7.500 7.500v15.500H14z" strokeWidth="3" />
          <path d="M24 3v8.500h8" strokeWidth="2.600" />
        </Icon>
      </IconButton>
      <IconButton label="书签">
        <Icon><path d="M8 3.500h19v30l-9.500-9-9.500 9z" strokeWidth="3" /></Icon>
      </IconButton>
      <IconButton label="附件">
        <Icon>
          <path d="M29.500 16L18 28.500C9 37-2 27 6 18L17 6.500c6-5.500 14 1 9 7.500L17 23c-3.500 3.500-8-.5-5-4.500l6.500-6.500" strokeWidth="2.700" />
        </Icon>
      </IconButton>
    </nav>
  );
}

/* Hand-drawn arrows pointing at the active tool and the two ticked options. */
function Annotations() {
  return (
    <svg className="pointer-events-none absolute right-0 top-0" width="620" height="910" viewBox="1540 258 620 910" fill="none" stroke="#ed1c24" strokeWidth="2.200" strokeLinejoin="round" aria-hidden="true">
      <path d="M1891 457L2066 444 2063 438 2084 446 2064 456.500 2067 450z" />
      <path d="M1562 1114L1710 1064.500 1706 1059 1728.500 1062 1712.500 1076.500 1712 1070z" />
      <path d="M1551 1132L1726 1140 1723.500 1133.500 1743 1144 1723 1152.500 1726 1145.700z" />
    </svg>
  );
}

export default function App() {
  return (
    <div className={"flex min-h-screen flex-col overflow-hidden bg-[#fbfbfb] " + UI_FONT}>
      <TitleBar />
      <MenuBar />
      <TabBar />
      <Toolbar />
      <EditBar />
      <main className="relative flex flex-1">
        <LeftRail />
        <button type="button" aria-label="展开导览窗格" className="flex w-[27px] shrink-0 items-center bg-[#eaeaea] pl-[8px] text-[#6e6e6e]">
          <svg width="10" height="16" viewBox="0 0 10 16" fill="currentColor"><path d="M10 0v16L0 8z" /></svg>
        </button>
        <section className="relative flex flex-1 justify-center bg-[#999]">
          <DocumentPage />
          <div className="absolute bottom-[11px] left-[8px] flex h-[37px] items-center rounded-md bg-[#181818] pl-[15px] pr-[13px] text-[18px] text-white shadow-md">20.988 x 29.700 厘米</div>
        </section>
        <Scrollbar />
        <button type="button" aria-label="收起工具窗格" className="flex w-[27px] shrink-0 items-center border-l border-[#cacaca] bg-[#eaeaea] pl-[7px] text-[#6e6e6e]">
          <svg width="10" height="16" viewBox="0 0 10 16" fill="currentColor"><path d="M0 0v16l10-8z" /></svg>
        </button>
        <FormatPanel />
        <ToolRail />
        <Annotations />
        <p className="pointer-events-none absolute bottom-2 right-2 text-[15px] text-[#dcdcdc]">https://blog.csdn.net/amnesiagreen</p>
      </main>
    </div>
  );
}
